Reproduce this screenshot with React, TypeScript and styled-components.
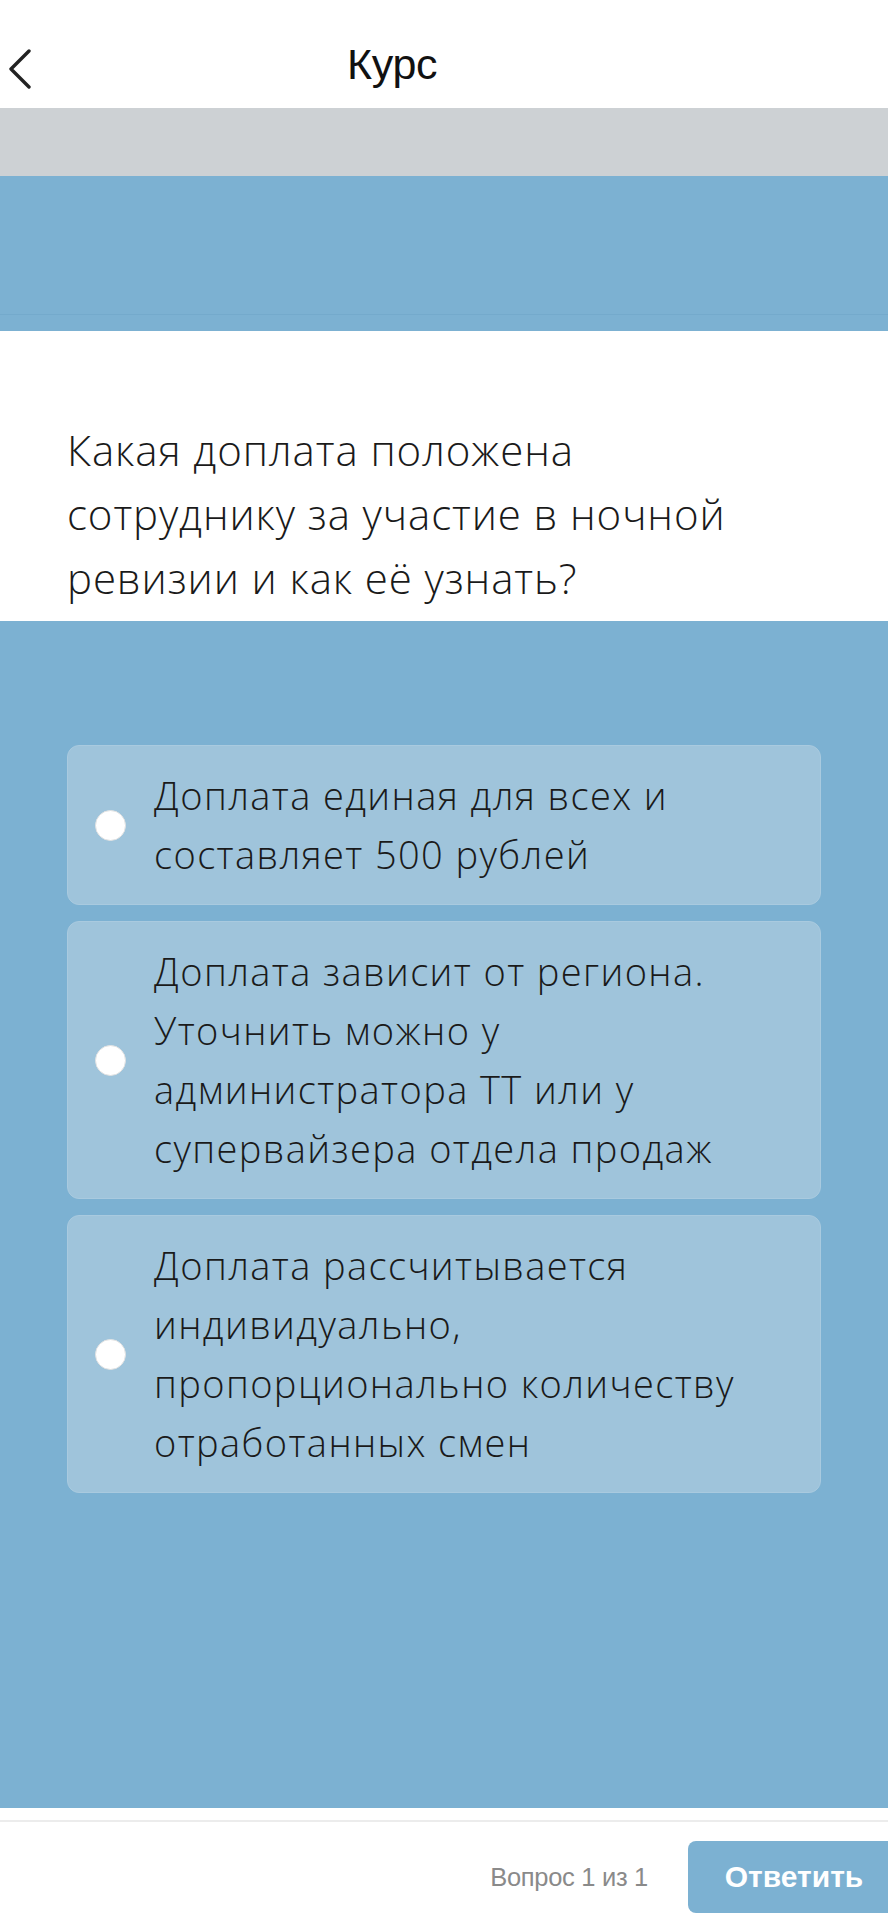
import React from "react";
import styled, { createGlobalStyle } from "styled-components";

const GlobalStyle = createGlobalStyle`
  body {
    margin: 0;
    background: #ffffff;
    font-family: "Liberation Sans", Arial, sans-serif;
  }
`;

const options = [
  ["Доплата единая для всех и", "составляет 500 рублей"],
  [
    "Доплата зависит от региона.",
    "Уточнить можно у",
    "администратора ТТ или у",
    "супервайзера отдела продаж",
  ],
  [
    "Доплата рассчитывается",
    "индивидуально,",
    "пропорционально количеству",
    "отработанных смен",
  ],
];

const App = () => {
  return (
    <Page>
      <GlobalStyle />
      <Header>
        <BackButton aria-label="Назад">
          <svg width="26" height="40" viewBox="0 0 26 40" fill="none">
            <path
              d="M22 2 L4 20 L22 38"
              stroke="#222"
              strokeWidth="3.4"
              strokeLinecap="round"
              strokeLinejoin="round"
            />
          </svg>
        </BackButton>
        <Title>Курс</Title>
      </Header>
      <GrayBand />
      <CoverBand />
      <Question>
        Какая доплата положена
        <br />
        сотруднику за участие в ночной
        <br />
        ревизии и как её узнать?
      </Question>
      <Answers>
        {options.map((lines, i) => (
          <Option key={i}>
            <Radio />
            <OptionText>
              {lines.map((line, j) => (
                <Line key={j}>{line}</Line>
              ))}
            </OptionText>
          </Option>
        ))}
      </Answers>
      <Footer>
        <Counter>Вопрос 1 из 1</Counter>
        <SubmitButton>Ответить</SubmitButton>
      </Footer>
    </Page>
  );
};

const Page = styled.div`
  width: 888px;
  height: 1920px;
  display: flex;
  flex-direction: column;
  overflow: hidden;
`;

const Header = styled.header`
  height: 108px;
  box-sizing: border-box;
  padding-top: 20px;
  display: flex;
  align-items: center;
  background: #fff;
`;

const BackButton = styled.button`
  border: none;
  background: none;
  padding: 0;
  margin: 10px 0 0 7px;
  display: flex;
  cursor: pointer;
`;

const Title = styled.h1`
  margin: 0 0 0 314px;
  font-family: "Liberation Sans", Arial, sans-serif;
  font-weight: 400;
  font-size: 43px;
  color: #111;
  letter-spacing: -0.3px;
`;

const GrayBand = styled.div`
  height: 68px;
  background: #cdd1d4;
`;

const CoverBand = styled.div`
  height: 155px;
  box-sizing: border-box;
  background: #7cb1d2;
  border-bottom: 16px solid #7cb1d2;
  box-shadow: inset 0 -17px 0 -16px #74aacc;
`;

const Question = styled.div`
  height: 290px;
  box-sizing: border-box;
  padding: 87px 20px 0 67px;
  font-family: "Open Sans", "Noto Sans", sans-serif;
  font-weight: 300;
  font-size: 42px;
  line-height: 64px;
  letter-spacing: 0.9px;
  color: #1a1a1a;
  background: #fff;
`;

const Answers = styled.div`
  height: 1187px;
  box-sizing: border-box;
  padding: 124px 67px 0;
  background: #7cb1d2;
  display: flex;
  flex-direction: column;
  gap: 16px;
`;

const Option = styled.div`
  display: flex;
  align-items: center;
  padding: 20px 10px 20px 27px;
  border-radius: 12px;
  background: #9fc4db;
  border: 1px solid #a9cadf;
`;

const Radio = styled.span`
  flex: 0 0 auto;
  width: 31px;
  height: 31px;
  border-radius: 50%;
  background: #fff;
  border: 1px solid #e2e2e2;
  box-sizing: border-box;
  margin-right: 28px;
`;

const OptionText = styled.div`
  font-family: "Open Sans", "Noto Sans", sans-serif;
  font-weight: 300;
  font-size: 38px;
  line-height: 59px;
  letter-spacing: 1.4px;
  color: #1a1a1a;
`;

const Line = styled.div`
  white-space: nowrap;
`;

const Footer = styled.footer`
  flex: 1;
  display: flex;
  align-items: center;
  justify-content: flex-end;
  gap: 40px;
  background: #fff;
  margin-top: 12px;
  border-top: 2px solid #ececec;
  padding-top: 18px;
  padding-bottom: 6px;
`;

const Counter = styled.span`
  font-family: "Liberation Sans", Arial, sans-serif;
  font-size: 25.5px;
  color: #8a8a8a;
  letter-spacing: -0.3px;
`;

const SubmitButton = styled.button`
  width: 200px;
  height: 72px;
  border: none;
  border-radius: 8px 0 0 8px;
  background: #7cb1d2;
  color: #fff;
  font-family: "Liberation Sans", Arial, sans-serif;
  font-weight: 700;
  font-size: 30px;
  padding: 0 0 0 12px;
  cursor: pointer;
`;

export default App;
